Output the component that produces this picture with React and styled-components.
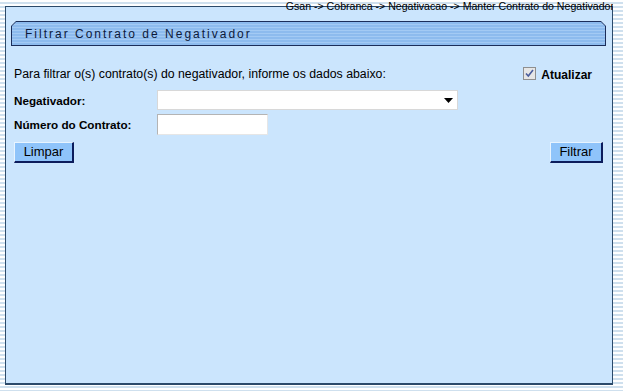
import styled, { createGlobalStyle } from 'styled-components';

// ── Global ───────────────────────────────────────────────────────────────────
const Global = createGlobalStyle`
  html, body {
    margin: 0;
    padding: 0;
  }
  body {
    width: 623px;
    height: 391px;
    overflow: hidden;
    font-family: "Liberation Sans", Arial, sans-serif;
    background: repeating-linear-gradient(
      to bottom,
      #ffffff 0px,
      #ffffff 2px,
      #cfe0ee 2px,
      #cfe0ee 4px
    );
  }
`;

// ── Styled components ────────────────────────────────────────────────────────
const Page = styled.div`
  padding: 0 10px 5px 5px;
`;

/* o caminho fica por cima da borda superior do painel */
const Breadcrumb = styled.div`
  position: relative;
  z-index: 1;
  height: 13px;
  margin-bottom: -7px;
  overflow: hidden;
  font-size: 10.6px;
  line-height: 13px;
  color: #000;
  white-space: nowrap;
  display: flex;
  justify-content: flex-end;

  span {
    margin-right: -1px;
  }
`;

const Panel = styled.div`
  box-sizing: border-box;
  height: 379px;
  background: #cbe5fd;
  border: 1px solid #2c4a6a;
  border-bottom-width: 2px;
  padding-top: 14px;
  display: flex;
  flex-direction: column;
`;

const TitleFrame = styled.div`
  margin: 0 6px 0 5px;
  height: 25px;
  background: #1c2e5a;
  clip-path: polygon(5px 0, calc(100% - 5px) 0, 100% 5px, 100% 100%, 0 100%, 0 5px);
  padding: 1px;
  box-sizing: border-box;
`;

const TitleBar = styled.div`
  height: 100%;
  clip-path: polygon(4px 0, calc(100% - 4px) 0, 100% 4px, 100% 100%, 0 100%, 0 4px);
  background: repeating-linear-gradient(
    to bottom,
    #8dbbee 0px,
    #8dbbee 2px,
    #a3caf4 2px,
    #a3caf4 3px
  );
  display: flex;
  align-items: center;
  padding-left: 13px;
  font-size: 12px;
  letter-spacing: 2px;
  color: #0d1a3a;
`;

const Body = styled.div`
  padding: 19px 8px 0 8px;
  display: flex;
  flex-direction: column;
`;

const IntroRow = styled.div`
  display: flex;
  justify-content: space-between;
  align-items: center;
  font-size: 12.3px;
  color: #000;
  height: 18px;
`;

const Refresh = styled.label`
  display: flex;
  align-items: center;
  gap: 5px;
  margin-right: 12px;
  font-weight: bold;
  font-size: 12px;
  margin-top: 2px;
`;

const CheckBox = styled.span`
  box-sizing: border-box;
  width: 13px;
  height: 13px;
  border: 1px solid #8f8f8f;
  background: #e6e6e6;
  display: flex;
  align-items: center;
  justify-content: center;
  margin-top: -3px;
`;

const FieldRow = styled.div`
  display: flex;
  align-items: center;
  height: ${(p) => p.$h}px;
  margin-top: ${(p) => p.$mt}px;
`;

const Label = styled.span`
  width: 143px;
  font-size: 11.7px;
  font-weight: bold;
  color: #000;
`;

const SelectBox = styled.div`
  box-sizing: border-box;
  width: 301px;
  height: 20px;
  background: #fff;
  border: 1px solid #d8d8d8;
  display: flex;
  align-items: center;
  justify-content: flex-end;
  padding-right: 4px;
`;

const TextBox = styled.div`
  box-sizing: border-box;
  width: 111px;
  height: 21px;
  background: #fff;
  border: 1px solid #b4b4b4;
  border-right-color: #e6e6e6;
  border-bottom-color: #e6e6e6;
`;

const ButtonRow = styled.div`
  display: flex;
  justify-content: space-between;
  margin-top: 7px;
  margin-right: 1px;
`;

const Button = styled.button`
  box-sizing: border-box;
  height: 21px;
  width: ${(p) => p.$w}px;
  padding: 0;
  font-family: "Liberation Sans", Arial, sans-serif;
  font-size: 13px;
  color: #000;
  background: #8fc4fa;
  border: 1px solid;
  border-color: #e8f4ff #0c1c5c #0c1c5c #e8f4ff;
  border-width: 1px 2px 2px 1px;
  line-height: 16px;
`;

// ── Componente ───────────────────────────────────────────────────────────────
const Arrow = () => (
  <svg width="9" height="5" viewBox="0 0 9 5">
    <path d="M0 0h9L4.5 5z" fill="#000" />
  </svg>
);

const Check = () => (
  <svg width="11" height="11" viewBox="0 0 11 11">
    <path d="M2 5.5l2.3 2.5L9 2" fill="none" stroke="#4a5d9c" strokeWidth="1.6" />
  </svg>
);

const App = () => {
  return (
    <Page>
      <Global />
      <Breadcrumb>
        <span>Gsan -&gt; Cobranca -&gt; Negativacao -&gt; Manter Contrato do Negativador</span>
      </Breadcrumb>
      <Panel>
        <TitleFrame>
          <TitleBar>Filtrar Contrato de Negativador</TitleBar>
        </TitleFrame>
        <Body>
          <IntroRow>
            <span>Para filtrar o(s) contrato(s) do negativador, informe os dados abaixo:</span>
            <Refresh>
              <CheckBox>
                <Check />
              </CheckBox>
              Atualizar
            </Refresh>
          </IntroRow>
          <FieldRow $h={20} $mt={7}>
            <Label>Negativador:</Label>
            <SelectBox>
              <Arrow />
            </SelectBox>
          </FieldRow>
          <FieldRow $h={21} $mt={4}>
            <Label>Número do Contrato:</Label>
            <TextBox />
          </FieldRow>
          <ButtonRow>
            <Button $w={60}>Limpar</Button>
            <Button $w={53}>Filtrar</Button>
          </ButtonRow>
        </Body>
      </Panel>
    </Page>
  );
};

export default App;
